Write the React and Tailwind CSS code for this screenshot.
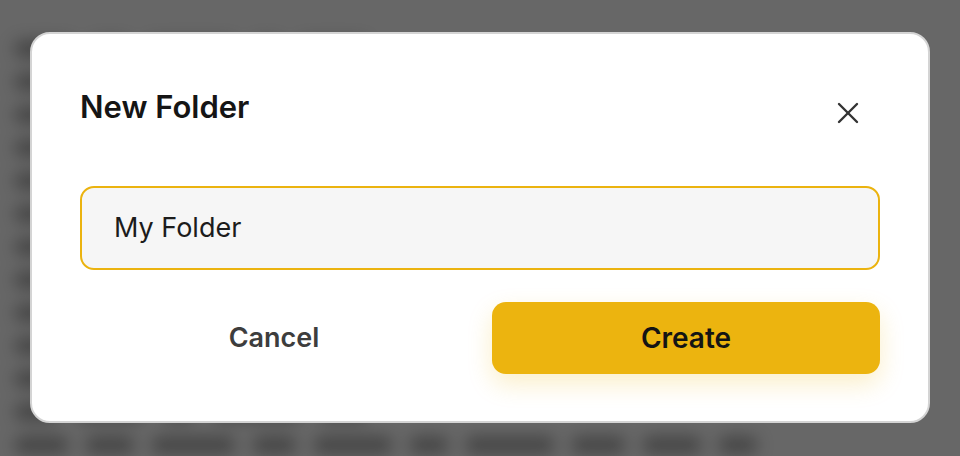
// word-shaped blobs for the blurred page behind the overlay
const bgRows = [
  [60, 40, 90, 30, 70],
  [80, 50, 40, 100],
  [45, 90, 60, 35, 80],
  [70, 30, 110, 50],
  [55, 85, 40, 60, 45],
  [90, 40, 70, 30],
  [40, 60, 95, 50, 35],
  [75, 45, 30, 85],
  [50, 100, 40, 60],
  [85, 35, 70, 45, 60],
  [60, 50, 80, 40],
  [45, 70, 35, 90, 50],
  [55, 50, 85, 45, 80, 40, 90, 55, 60, 40],
];

function CloseIcon() {
  return (
    <svg width="22" height="22" viewBox="0 0 22 22" fill="none" stroke="currentColor" strokeWidth="2.4" strokeLinecap="round">
      <line x1="2" y1="2" x2="20" y2="20" />
      <line x1="20" y1="2" x2="2" y2="20" />
    </svg>
  );
}

export default function App() {
  return (
    <div
      className="relative w-full h-[456px] overflow-hidden bg-[#676767]"
      style={{ fontFamily: "Inter, 'Noto Sans', sans-serif" }}
    >
      {/* page content behind the overlay */}
      <div className="absolute inset-0 pt-[40px] pl-[14px] blur-[8px] opacity-50 flex flex-col gap-[15px]">
        {bgRows.map((row, i) => (
          <div key={i} className="flex gap-[16px] h-[18px]">
            {row.map((w, j) => (
              <div key={j} className="h-full rounded-full bg-[#262626]" style={{ width: w }} />
            ))}
          </div>
        ))}
      </div>

      {/* dialog */}
      <div className="absolute inset-0 pt-[32px] px-[30px]">
        <div className="w-[900px] rounded-[20px] border-2 border-[#d4d4d4] bg-white pt-[55px] pb-[47px] px-[48px]">
          <div className="flex items-start justify-between">
            <h2 className="text-[31px] leading-[36px] font-semibold text-[#151515]">
              New Folder
            </h2>
            <button className="w-11 h-11 mt-[2px] mr-[10px] flex items-center justify-center text-[#333]">
              <CloseIcon />
            </button>
          </div>

          <div className="mt-[51px] h-[84px] rounded-[14px] border-2 border-[#ebb30f] bg-[#f6f6f6] flex items-center pl-[32px]">
            <span className="text-[27px] text-[#1c1c1c]">My Folder</span>
          </div>

          <div className="mt-[32px] grid grid-cols-2 gap-[24px]">
            <button className="h-[72px] flex items-center justify-center text-[27px] font-semibold text-[#3d3d3d]">
              Cancel
            </button>
            <button className="h-[72px] rounded-[14px] bg-[#ecb40f] flex items-center justify-center text-[28px] font-semibold text-[#141414] shadow-[0_10px_24px_rgba(236,180,15,0.22)]">
              Create
            </button>
          </div>
        </div>
      </div>
    </div>
  );
}
